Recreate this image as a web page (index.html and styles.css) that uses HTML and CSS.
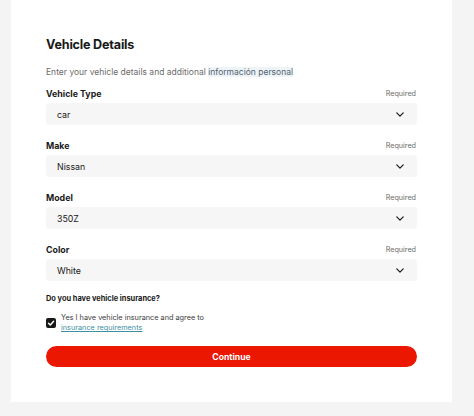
FILE: index.html
```html
<!DOCTYPE html>
<html>
<head>
<meta charset="utf-8">
<link rel="stylesheet" href="styles.css">
</head>
<body>
<div class="page">
  <div class="card">
    <h1 class="title">Vehicle Details</h1>
    <p class="subtitle">Enter your vehicle details and additional <span class="hl">información personal</span></p>

    <div class="field first">
      <div class="label-row"><span class="label">Vehicle Type</span><span class="req">Required</span></div>
      <div class="select"><span>car</span><svg class="chev" viewBox="0 0 10 6"><polyline points="1,1 5,5 9,1"/></svg></div>
    </div>
    <div class="field">
      <div class="label-row"><span class="label">Make</span><span class="req">Required</span></div>
      <div class="select"><span>Nissan</span><svg class="chev" viewBox="0 0 10 6"><polyline points="1,1 5,5 9,1"/></svg></div>
    </div>
    <div class="field">
      <div class="label-row"><span class="label">Model</span><span class="req">Required</span></div>
      <div class="select"><span>350Z</span><svg class="chev" viewBox="0 0 10 6"><polyline points="1,1 5,5 9,1"/></svg></div>
    </div>
    <div class="field">
      <div class="label-row"><span class="label">Color</span><span class="req">Required</span></div>
      <div class="select"><span>White</span><svg class="chev" viewBox="0 0 10 6"><polyline points="1,1 5,5 9,1"/></svg></div>
    </div>

    <div class="question">Do you have vehicle insurance?</div>
    <div class="check-row">
      <span class="box"><svg viewBox="0 0 10 10"><polyline points="2.5,5.2 4.3,7 7.6,3.2"/></svg></span>
      <div class="check-text">Yes I have vehicle insurance and agree to<br><a class="link">insurance requirements</a></div>
    </div>
    <button class="btn">Continue</button>
  </div>
</div>
</body>
</html>
```
FILE: styles.css
```css
html, body {
  margin: 0;
  padding: 0;
  background: #f4f4f4;
}
body {
  font-family: "Inter", "Liberation Sans", sans-serif;
  color: #191919;
}
.page {
  padding: 0 22px 14px 11px;
}
.card {
  background: #ffffff;
  width: 441px;
  box-sizing: border-box;
  padding: 36px 35px 35px;
}
.title {
  margin: 0;
  font-size: 12.6px;
  line-height: 18px;
  font-weight: 700;
  letter-spacing: -0.2px;
  color: #191919;
}
.subtitle {
  margin: 11px 0 0;
  font-size: 8.5px;
  line-height: 14px;
  color: #6b6b6b;
}
.hl {
  background: #eef3f6;
  color: #4f6472;
}
.field {
  margin-top: 13px;
}
.field.first {
  margin-top: 7px;
}
.label-row {
  display: flex;
  justify-content: space-between;
  align-items: center;
  height: 14px;
}
.label {
  font-size: 8.8px;
  font-weight: 700;
  color: #191919;
}
.req {
  font-size: 7.2px;
  color: #6b6b6b;
  padding-right: 1px;
}
.select {
  margin-top: 3px;
  height: 22px;
  background: #f6f6f6;
  border-radius: 4px;
  display: flex;
  align-items: center;
  justify-content: space-between;
  padding: 0 13px 0 11px;
  font-size: 8.8px;
  color: #191919;
}
.chev {
  width: 8px;
  height: 5px;
  fill: none;
  stroke: #191919;
  stroke-width: 1.5;
  stroke-linecap: round;
  stroke-linejoin: round;
}
.question {
  margin-top: 12px;
  font-size: 7.4px;
  line-height: 12px;
  font-weight: 700;
  color: #191919;
}
.check-row {
  margin-top: 8px;
  display: flex;
  align-items: center;
  gap: 5px;
}
.box {
  width: 10px;
  height: 10px;
  border-radius: 2px;
  background: #191919;
  display: flex;
  flex-shrink: 0;
}
.box svg {
  width: 10px;
  height: 10px;
  fill: none;
  stroke: #ffffff;
  stroke-width: 1.4;
  stroke-linecap: round;
  stroke-linejoin: round;
}
.check-text {
  font-size: 7.3px;
  line-height: 10px;
  color: #3a3a3a;
}
.link {
  color: #3f8fa3;
  text-decoration: underline;
}
.btn {
  display: block;
  width: 100%;
  margin-top: 13px;
  height: 21px;
  border: none;
  border-radius: 11px;
  background: #eb1700;
  color: #ffffff;
  font-family: inherit;
  font-size: 8.6px;
  font-weight: 700;
  padding: 0;
}
```
